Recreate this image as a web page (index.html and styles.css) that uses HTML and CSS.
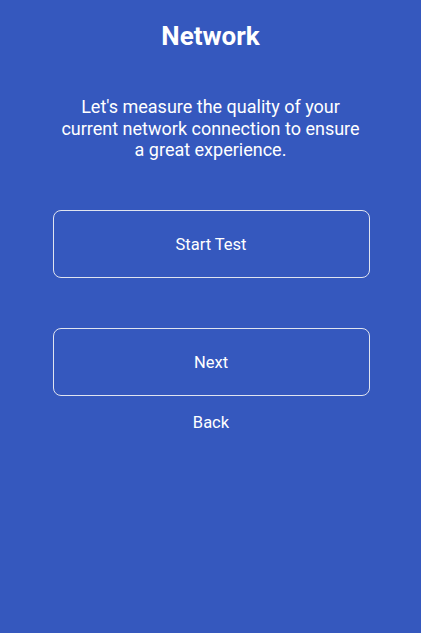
FILE: index.html
```html
<!DOCTYPE html>
<html>
<head>
<meta charset="utf-8">
<link rel="stylesheet" href="styles.css">
</head>
<body>
<div class="screen">
  <h1 class="title">Network</h1>
  <p class="intro">Let's measure the quality of your current network connection to ensure a great experience.</p>
  <button class="btn start">Start Test</button>
  <button class="btn next">Next</button>
  <button class="link">Back</button>
</div>
</body>
</html>
```
FILE: styles.css
```css
html, body {
  margin: 0;
  padding: 0;
  background: #3558be;
}
.screen {
  width: 421px;
  height: 633px;
  box-sizing: border-box;
  background: #3558be;
  color: #ffffff;
  font-family: Roboto, "Noto Sans", sans-serif;
  display: flex;
  flex-direction: column;
  align-items: center;
  padding-top: 20px;
}
.title {
  margin: 0;
  font-size: 26px;
  font-weight: 700;
  line-height: 32px;
}
.intro {
  margin: 44px 0 0;
  width: 310px;
  text-align: center;
  font-size: 18px;
  line-height: 21.5px;
}
.btn {
  box-sizing: border-box;
  width: 317px;
  height: 68px;
  background: transparent;
  border: 1px solid #e0e4f0;
  border-radius: 8px;
  color: #ffffff;
  font-family: Roboto, "Noto Sans", sans-serif;
  font-size: 16.5px;
  padding: 2px 0 0;
  margin-left: 1px;
}
.start {
  margin-top: 49px;
}
.next {
  margin-top: 50px;
}
.link {
  margin-top: 15px;
  margin-left: 1px;
  background: transparent;
  border: none;
  color: #ffffff;
  font-family: Roboto, "Noto Sans", sans-serif;
  font-size: 16.5px;
  padding: 0;
  line-height: 24px;
}
```
